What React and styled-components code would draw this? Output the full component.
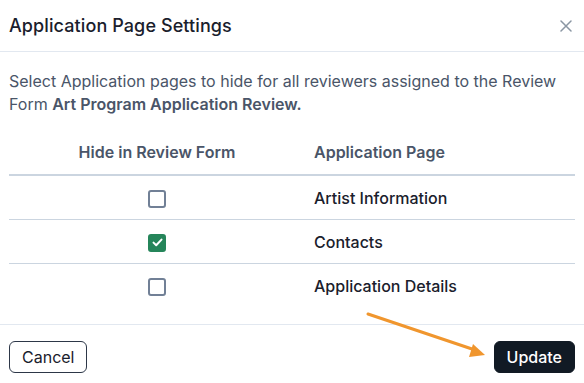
import React, { useState } from "react";
import styled, { createGlobalStyle } from "styled-components";

const GlobalStyle = createGlobalStyle`
  html, body {
    margin: 0;
    padding: 0;
    background: #ffffff;
  }
  body {
    font-family: Inter, "Noto Sans", Arial, sans-serif;
    -webkit-font-smoothing: antialiased;
  }
`;

const Modal = styled.div`
  position: relative;
  width: 584px;
  height: 383px;
  background: #fff;
  overflow: hidden;
`;

const Header = styled.div`
  display: flex;
  align-items: center;
  justify-content: space-between;
  height: 52px;
  padding: 0 6px 0 9px;
  border-bottom: 1px solid #e2e8f0;
  box-sizing: border-box;
`;

const Title = styled.h2`
  margin: 0;
  font-size: 18px;
  font-weight: 500;
  color: #1a202c;
  letter-spacing: 0.1px;
`;

const CloseButton = styled.button`
  width: 24px;
  height: 24px;
  border: 0;
  background: transparent;
  padding: 0;
  display: flex;
  align-items: center;
  justify-content: center;
  cursor: pointer;
`;

const Body = styled.div`
  padding: 18px 9px 0;
`;

const Intro = styled.p`
  margin: 0 0 14px;
  font-size: 16px;
  line-height: 23px;
  color: #4a5568;

  strong {
    font-weight: 600;
  }
`;

const Table = styled.table`
  width: 100%;
  table-layout: fixed;
  border-collapse: collapse;
  font-size: 16px;
`;

const HeadCell = styled.th`
  height: 44px;
  padding: 0 9px;
  font-weight: 600;
  color: #4a5568;
  text-align: ${(p) => (p.$center ? "center" : "left")};
  width: ${(p) => p.$width || "auto"};
  border-bottom: 2px solid #cbd5e0;
`;

const Cell = styled.td`
  height: 43px;
  padding: 0 9px;
  color: #1a202c;
  font-weight: 500;
  text-align: ${(p) => (p.$center ? "center" : "left")};
  border-bottom: ${(p) => (p.$last ? "0" : "1px solid #cbd5e0")};
  vertical-align: middle;
`;

const Box = styled.span`
  display: inline-flex;
  align-items: center;
  justify-content: center;
  width: 18px;
  height: 18px;
  box-sizing: border-box;
  border-radius: 3px;
  border: 2px solid ${(p) => (p.$checked ? "#25855a" : "#718096")};
  background: ${(p) => (p.$checked ? "#25855a" : "#fff")};
  vertical-align: middle;
  cursor: pointer;
`;

const Footer = styled.div`
  position: absolute;
  left: 0;
  right: 0;
  bottom: 0;
  display: flex;
  justify-content: space-between;
  align-items: center;
  height: 59px;
  padding: 6px 9px 0;
  box-sizing: border-box;
  border-top: 1px solid #e2e8f0;
`;

const Button = styled.button`
  height: 32px;
  padding: 0 12px;
  border-radius: 6px;
  font-family: inherit;
  font-size: 16px;
  font-weight: ${(p) => (p.$primary ? 500 : 400)};
  cursor: pointer;
  border: 1px solid ${(p) => (p.$primary ? "#111a24" : "#2d3748")};
  background: ${(p) => (p.$primary ? "#111a24" : "#fff")};
  color: ${(p) => (p.$primary ? "#fff" : "#1a202c")};
`;

const Arrow = styled.svg`
  position: absolute;
  left: 360px;
  top: 308px;
  pointer-events: none;
`;

const pages = [
  { name: "Artist Information", hidden: false },
  { name: "Contacts", hidden: true },
  { name: "Application Details", hidden: false },
];

function Checkbox({ checked, onToggle }) {
  return (
    <Box $checked={checked} onClick={onToggle} role="checkbox" aria-checked={checked}>
      {checked && (
        <svg width="11" height="9" viewBox="0 0 11 9">
          <path d="M1.5 4.6 L4.2 7.2 L9.5 1.6" fill="none" stroke="#fff" strokeWidth="2" strokeLinecap="round" strokeLinejoin="round" />
        </svg>
      )}
    </Box>
  );
}

export default function App() {
  const [rows, setRows] = useState(pages);

  const toggle = (i) =>
    setRows((r) => r.map((row, j) => (j === i ? { ...row, hidden: !row.hidden } : row)));

  return (
    <>
      <GlobalStyle />
      <Modal>
        <Header>
          <Title>Application Page Settings</Title>
          <CloseButton aria-label="Close">
            <svg width="12" height="12" viewBox="0 0 12 12">
              <path d="M1 1 L11 11 M11 1 L1 11" stroke="#8a96a3" strokeWidth="1.5" strokeLinecap="round" />
            </svg>
          </CloseButton>
        </Header>
        <Body>
          <Intro>
            Select Application pages to hide for all reviewers assigned to the Review Form{" "}
            <strong>Art Program Application Review.</strong>
          </Intro>
          <Table>
            <thead>
              <tr>
                <HeadCell $center $width="278px">Hide in Review Form</HeadCell>
                <HeadCell>Application Page</HeadCell>
              </tr>
            </thead>
            <tbody>
              {rows.map((row, i) => (
                <tr key={row.name}>
                  <Cell $center $last={i === rows.length - 1}>
                    <Checkbox checked={row.hidden} onToggle={() => toggle(i)} />
                  </Cell>
                  <Cell $last={i === rows.length - 1}>{row.name}</Cell>
                </tr>
              ))}
            </tbody>
          </Table>
        </Body>
        <Footer>
          <Button>Cancel</Button>
          <Button $primary>Update</Button>
        </Footer>
        <Arrow width="140" height="60" viewBox="0 0 140 60">
          <line x1="8" y1="6" x2="115" y2="42" stroke="#f0962e" strokeWidth="3" strokeLinecap="round" />
          <polygon points="125,47 109,49 113,36" fill="#f0962e" />
        </Arrow>
      </Modal>
    </>
  );
}
